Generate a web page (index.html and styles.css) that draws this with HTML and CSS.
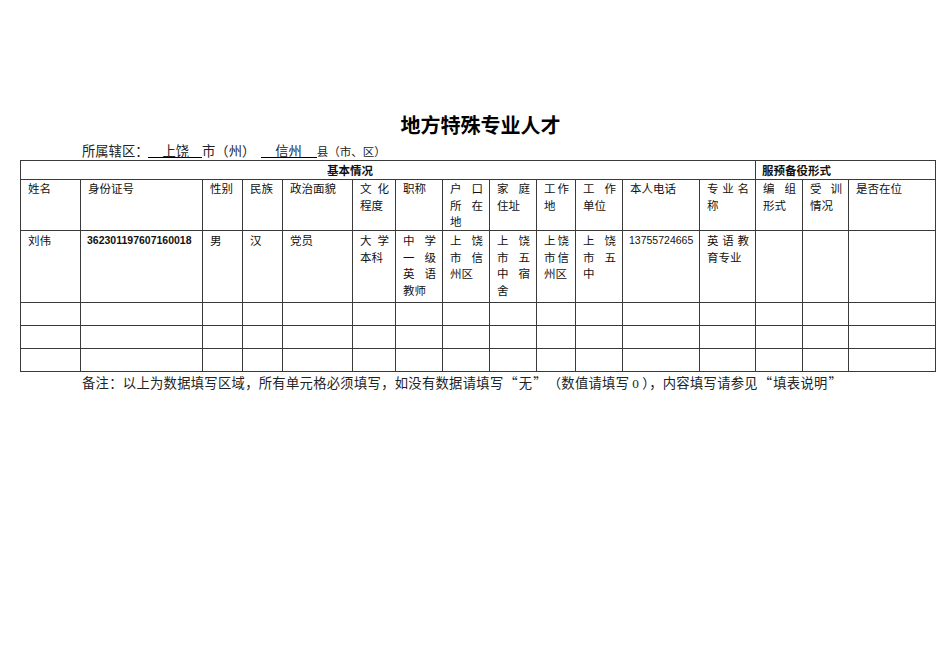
FILE: index.html
```html
<!DOCTYPE html>
<html lang="zh-CN">
<head>
<meta charset="utf-8">
<title>地方特殊专业人才</title>
<link rel="stylesheet" href="styles.css">
</head>
<body>
<div class="page">
  <h1 class="title">地方特殊专业人才</h1>
  <p class="region">所属辖区：<span class="u">上饶</span>市（州）<span class="u u2">信州</span><span class="small">县（市、区）</span></p>
  <table class="grid">
    <colgroup>
      <col class="w60"><col class="w122"><col class="w40"><col class="w40"><col class="w70"><col class="w43"><col class="w47"><col class="w47"><col class="w47"><col class="w39"><col class="w47"><col class="w77"><col class="w56"><col class="w47"><col class="w46"><col class="w87">
    </colgroup>
    <tr class="r1">
      <th colspan="13" class="sec sec-basic">基本情况</th>
      <th colspan="3" class="sec">服预备役形式</th>
    </tr>
    <tr class="r2">
      <td>姓名</td><td>身份证号</td><td>性别</td><td>民族</td><td>政治面貌</td><td>文化程度</td><td>职称</td><td>户口所在地</td><td>家庭住址</td><td>工作地</td><td>工作单位</td><td>本人电话</td><td>专业名称</td><td>编组形式</td><td>受训情况</td><td>是否在位</td>
    </tr>
    <tr class="r3">
      <td>刘伟</td><td class="num bold">362301197607160018</td><td>男</td><td>汉</td><td>党员</td><td>大学本科</td><td>中学一级英语教师</td><td>上饶市信州区</td><td>上饶市五中宿舍</td><td>上饶市信州区</td><td>上饶市五中</td><td class="num">13755724665</td><td>英语教育专业</td><td></td><td></td><td></td>
    </tr>
    <tr class="r4"><td></td><td></td><td></td><td></td><td></td><td></td><td></td><td></td><td></td><td></td><td></td><td></td><td></td><td></td><td></td><td></td></tr>
    <tr class="r4"><td></td><td></td><td></td><td></td><td></td><td></td><td></td><td></td><td></td><td></td><td></td><td></td><td></td><td></td><td></td><td></td></tr>
    <tr class="r4"><td></td><td></td><td></td><td></td><td></td><td></td><td></td><td></td><td></td><td></td><td></td><td></td><td></td><td></td><td></td><td></td></tr>
  </table>
  <p class="note">备注：以上为数据填写区域，所有单元格必须填写，如没有数据请填写<span class="fw">“</span>无<span class="fw">”</span>（数值请填写<span class="zero">0</span>），内容填写请参见<span class="fw">“</span>填表说明<span class="fw">”</span></p>
</div>
</body>
</html>
```

FILE: styles.css
```css
html, body {
  margin: 0;
  padding: 0;
  background: #ffffff;
}

body {
  font-family: "Noto Sans CJK SC", "Liberation Serif", sans-serif;
  color: #000;
}

.page {
  padding: 113px 0 0 20px;
  width: 916px;
}

.title {
  margin: 0;
  font-size: 20px;
  line-height: 24px;
  font-weight: 700;
  text-align: center;
  padding-left: 5px;
}

.region {
  margin: 6px 0 1px 62px;
  font-size: 13.3px;
  line-height: 16px;
  height: 16px;
  color: #222;
}

.u {
  display: inline-block;
  line-height: 13px;
  padding: 0 13px 0 14px;
  border-bottom: 1px solid #000;
}

.u2 {
  margin-left: 6px;
  padding: 0 15px 0 14px;
}

.small {
  font-size: 11.5px;
}

.grid {
  border-collapse: collapse;
  table-layout: fixed;
  width: 916px;
  font-size: 11.5px;
  line-height: 16.6px;
}

.grid td,
.grid th {
  border: 1px solid #3a3a3a;
  padding: 0 6px 0 7px;
  vertical-align: top;
  text-align: justify;
  font-weight: 400;
  color: #111;
  overflow: visible;
}

.grid td {
  padding-top: 1px;
}

.w60 { width: 60px; }
.w122 { width: 122px; }
.w40 { width: 40px; }
.w43 { width: 43px; }
.w47 { width: 47px; }
.w70 { width: 70px; }
.w39 { width: 39px; }
.w77 { width: 77px; }
.w56 { width: 56px; }
.w46 { width: 46px; }
.w87 { width: 87px; }

.r1 { height: 19px; }
.r2 { height: 51px; }
.r3 { height: 72px; }
.r4 { height: 23px; }

.r2 td {
  padding-top: 0;
}

.grid th.sec {
  font-weight: 700;
  vertical-align: middle;
  text-align: left;
  line-height: 16px;
  padding-left: 6px;
}

.grid th.sec-basic {
  padding-left: 306px;
}

.grid td.num {
  font-family: "Liberation Sans", "DejaVu Sans", sans-serif;
  font-size: 10.5px;
  text-align: left;
  padding-left: 6px;
  padding-right: 0;
}

.grid td.bold {
  font-weight: 700;
}

.note {
  margin: 2px 0 0 62px;
  font-size: 13.3px;
  line-height: 18px;
  letter-spacing: 0.3px;
  color: #222;
  white-space: nowrap;
}

.fw {
  display: inline-block;
  width: 1.15em;
  text-align: center;
}

.zero {
  font-family: "Liberation Serif", serif;
  padding: 0 3px;
}
```
